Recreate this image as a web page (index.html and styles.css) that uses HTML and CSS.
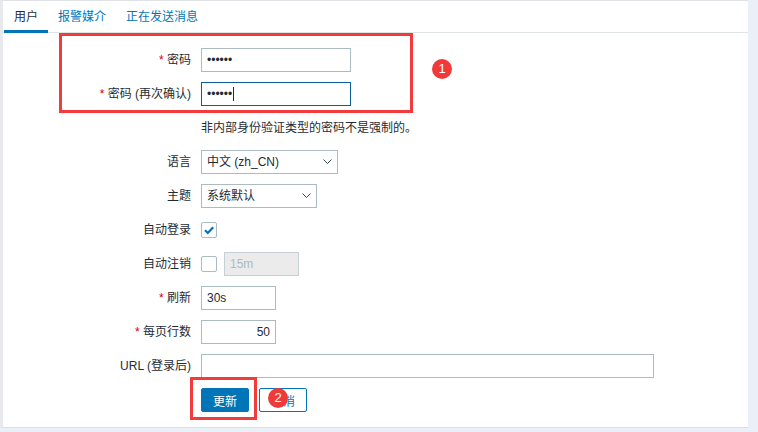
FILE: index.html
```html
<!DOCTYPE html>
<html lang="zh-CN">
<head>
<meta charset="utf-8">
<title>用户</title>
<link rel="stylesheet" href="styles.css">
</head>
<body>
<div class="page">
  <div class="panel">
    <div class="tabs">
      <div class="tab active">用户</div>
      <div class="tab">报警媒介</div>
      <div class="tab">正在发送消息</div>
    </div>
    <div class="form">
      <div class="label"><span class="req">*</span> 密码</div>
      <div class="field"><div class="input w150"><span class="dots">••••••</span></div></div>

      <div class="label"><span class="req">*</span> 密码 (再次确认)</div>
      <div class="field"><div class="input w150 focus"><span class="dots">••••••</span><span class="caret"></span></div></div>

      <div class="label"></div>
      <div class="field hint">非内部身份验证类型的密码不是强制的。</div>

      <div class="label">语言</div>
      <div class="field">
        <div class="select w137"><span>中文 (zh_CN)</span>
          <svg class="chev" width="9" height="5" viewBox="0 0 9 5"><path d="M0.5 0.5 L4.5 4.5 L8.5 0.5" fill="none" stroke="#3b4a52" stroke-width="1"/></svg>
        </div>
      </div>

      <div class="label">主题</div>
      <div class="field">
        <div class="select w116"><span>系统默认</span>
          <svg class="chev" width="9" height="5" viewBox="0 0 9 5"><path d="M0.5 0.5 L4.5 4.5 L8.5 0.5" fill="none" stroke="#3b4a52" stroke-width="1"/></svg>
        </div>
      </div>

      <div class="label">自动登录</div>
      <div class="field">
        <div class="checkbox">
          <svg width="14" height="14" viewBox="0 0 14 14"><path d="M3 7.2 L5.8 10 L11.2 4.2" fill="none" stroke="#0275b8" stroke-width="2.2"/></svg>
        </div>
      </div>

      <div class="label">自动注销</div>
      <div class="field gap7">
        <div class="checkbox"></div>
        <div class="input w75 disabled">15m</div>
      </div>

      <div class="label"><span class="req">*</span> 刷新</div>
      <div class="field"><div class="input w75">30s</div></div>

      <div class="label"><span class="req">*</span> 每页行数</div>
      <div class="field"><div class="input w75 right">50</div></div>

      <div class="label">URL (登录后)</div>
      <div class="field"><div class="input w453"></div></div>

      <div class="label"></div>
      <div class="field gap10">
        <button class="btn primary">更新</button>
        <button class="btn secondary">取消</button>
      </div>
    </div>
  </div>

  <div class="mark mark1"></div>
  <div class="badge badge1">1</div>
  <div class="mark mark2"></div>
  <div class="badge badge2">2</div>
</div>
</body>
</html>
```

FILE: styles.css
```css
html, body {
  margin: 0;
  padding: 0;
}
body {
  background: #ebf0f8;
  font-family: "Liberation Sans", "Noto Sans CJK SC", sans-serif;
  font-size: 12px;
  color: #1f2c33;
}
.page {
  position: relative;
  width: 758px;
  height: 432px;
  overflow: hidden;
}
.panel {
  box-sizing: border-box;
  width: 748px;
  height: 428px;
  background: #ffffff;
  border-top: 1px solid #dfe3e8;
  border-left: 3px solid #e7e9ec;
  border-bottom: 1px solid #dcdfe4;
}
.tabs {
  display: flex;
  height: 31px;
  border-bottom: 1px solid #dfe4e7;
  padding-left: 1px;
}
.tab {
  box-sizing: border-box;
  height: 32px;
  padding: 4px 10px 0;
  line-height: 24px;
  color: #0275b8;
  white-space: nowrap;
}
.tab.active {
  color: #1f2c33;
  border-bottom: 3px solid #0275b8;
}
.form {
  display: grid;
  grid-template-columns: 188px 1fr;
  column-gap: 10px;
  row-gap: 10px;
  padding-top: 15px;
  grid-auto-rows: 24px;
}
.label {
  text-align: right;
  line-height: 24px;
  white-space: nowrap;
}
.req {
  color: #d40000;
}
.field {
  display: flex;
  align-items: center;
}
.gap7 { gap: 7px; }
.gap10 { gap: 10px; }
.hint {
  line-height: 24px;
}
.input, .select {
  box-sizing: border-box;
  height: 24px;
  border: 1px solid #acbbc2;
  background: #fff;
  padding: 0 5px;
  line-height: 22px;
  display: flex;
  align-items: center;
  white-space: nowrap;
}
.input.focus {
  border-color: #0b5e96;
}
.input.disabled {
  background: #ebebeb;
  color: #acbbc2;
  border-color: #c5d0d5;
}
.input.right {
  justify-content: flex-end;
}
.dots {
  letter-spacing: 0;
  font-size: 12px;
  color: #1f2c33;
}
.caret {
  display: inline-block;
  width: 1px;
  height: 14px;
  background: #1f2c33;
  margin-left: 1px;
}
.w150 { width: 150px; }
.w137 { width: 137px; }
.w116 { width: 116px; }
.w75 { width: 75px; }
.w453 { width: 453px; }
.select {
  justify-content: space-between;
  padding-right: 5px;
}
.chev {
  display: block;
  margin-top: -1px;
}
.checkbox {
  box-sizing: border-box;
  width: 16px;
  height: 16px;
  border: 1px solid #acbbc2;
  border-radius: 2px;
  background: #fff;
  display: flex;
  align-items: center;
  justify-content: center;
}
.checkbox svg {
  display: block;
}
.btn {
  box-sizing: border-box;
  height: 24px;
  width: 48px;
  padding: 0;
  font-family: inherit;
  font-size: 12px;
  border-radius: 2px;
  border: 1px solid #0275b8;
  cursor: pointer;
}
.btn.primary {
  background: #0275b8;
  color: #fff;
}
.btn.secondary {
  background: #fff;
  color: #0275b8;
}
.mark {
  position: absolute;
  box-sizing: border-box;
  border: 3px solid #f23c3c;
}
.mark1 {
  left: 59px;
  top: 33px;
  width: 354px;
  height: 80px;
}
.mark2 {
  left: 190px;
  top: 377px;
  width: 67px;
  height: 43px;
}
.badge {
  position: absolute;
  width: 20px;
  height: 20px;
  border-radius: 50%;
  background: #f03a3a;
  color: #fff;
  font-size: 13px;
  line-height: 20px;
  text-align: center;
}
.badge1 {
  left: 432px;
  top: 59px;
}
.badge2 {
  left: 268px;
  top: 388px;
}
```
